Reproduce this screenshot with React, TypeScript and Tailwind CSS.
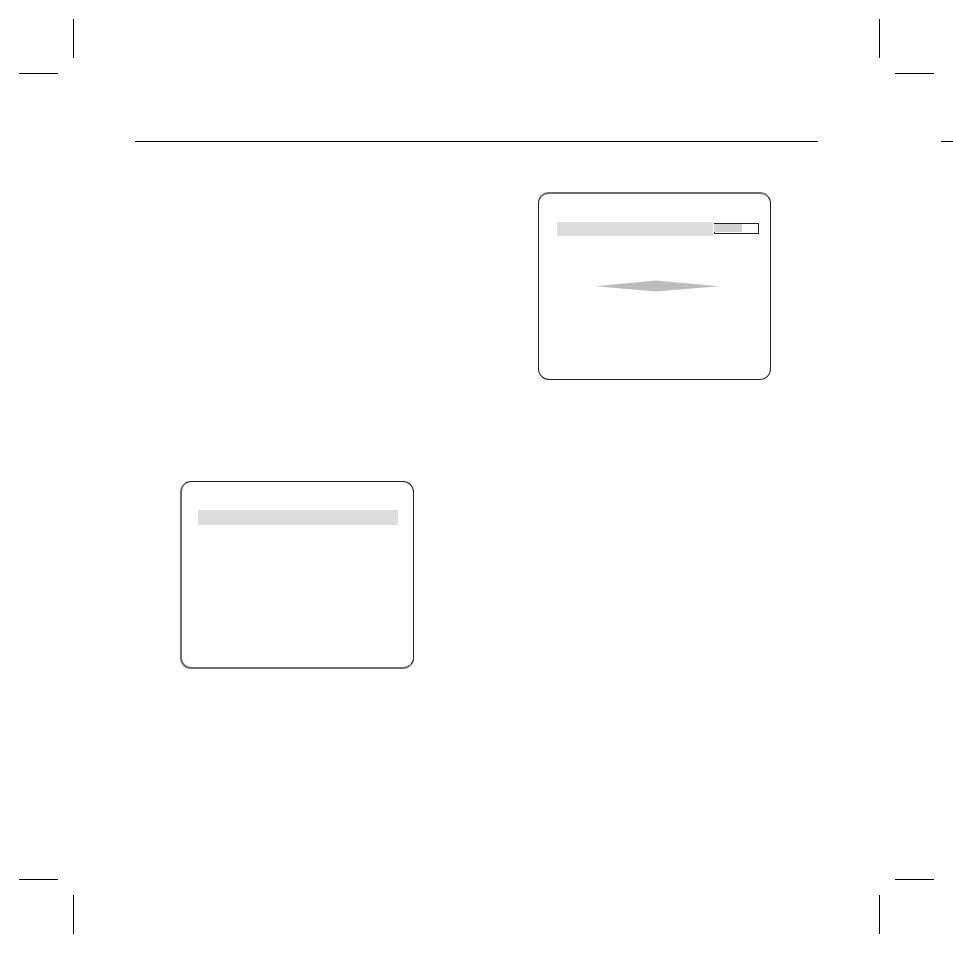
import clsx from "clsx";

// printer's crop mark, drawn for the top left corner and mirrored for the others
function CropMark({ className }: { className?: string }) {
  return (
    <svg
      className={clsx("block h-[55px] w-[55px]", className)}
      viewBox="0 0 55 55"
      shapeRendering="crispEdges"
      aria-hidden="true"
    >
      <rect x="54" y="0" width="1" height="39" fill="#000" />
      <rect x="0" y="54" width="39" height="1" fill="#000" />
    </svg>
  );
}

function LevelBar() {
  return (
    <div className="mt-px ml-px h-[11px] w-[45px] border border-[#231f20]">
      <div className="-ml-px h-2 w-7 bg-[#d1d3d2]" />
    </div>
  );
}

function MenuScreen() {
  return (
    <section className="mt-[339px] h-[188px] w-[234px] rounded-[11px] border border-b-2 border-l-2 border-[#231f20] border-b-[#6d6e70] border-l-[#6d6e70] pt-7 pr-[15px] pl-4">
      <div className="h-[15px] bg-[#dcdcdc]" />
    </section>
  );
}

function AdjustScreen() {
  return (
    <section className="mt-[50px] h-[188px] w-[233px] rounded-[11px] border border-t-2 border-[#231f20] border-t-[#6d6e70] pt-7 pr-[11px] pl-[18px]">
      <div className="flex items-start">
        <div className="h-[14px] flex-1 bg-[#dcdcdc]" />
        <LevelBar />
      </div>

      <svg
        className="mt-11 ml-[38px] block h-3 w-[124px]"
        viewBox="0 0 124 12"
        aria-hidden="true"
      >
        <path d="M0.5 6.3 L61 0.4 L124 6.3 L61 11.6 Z" fill="#bbbbbb" />
      </svg>
    </section>
  );
}

export default function App() {
  return (
    <div className="flex min-h-screen flex-col bg-[#fefefe]">

      <header>
        <div className="flex justify-between px-[19px] pt-[19px]">
          <CropMark />
          <CropMark className="-scale-x-100" />
        </div>

        <div className="mt-[67px] flex justify-between pl-[135px]">
          <div className="mr-[123px] h-px flex-1 bg-black" />
          <div className="h-px w-3 bg-black" />
        </div>
      </header>

      <main className="flex flex-1 items-start justify-between pr-[182px] pl-[180px]">
        <MenuScreen />
        <AdjustScreen />
      </main>

      <footer className="flex justify-between px-[19px] pb-[19px]">
        <CropMark className="-scale-y-100" />
        <CropMark className="-scale-100" />
      </footer>

    </div>
  );
}
